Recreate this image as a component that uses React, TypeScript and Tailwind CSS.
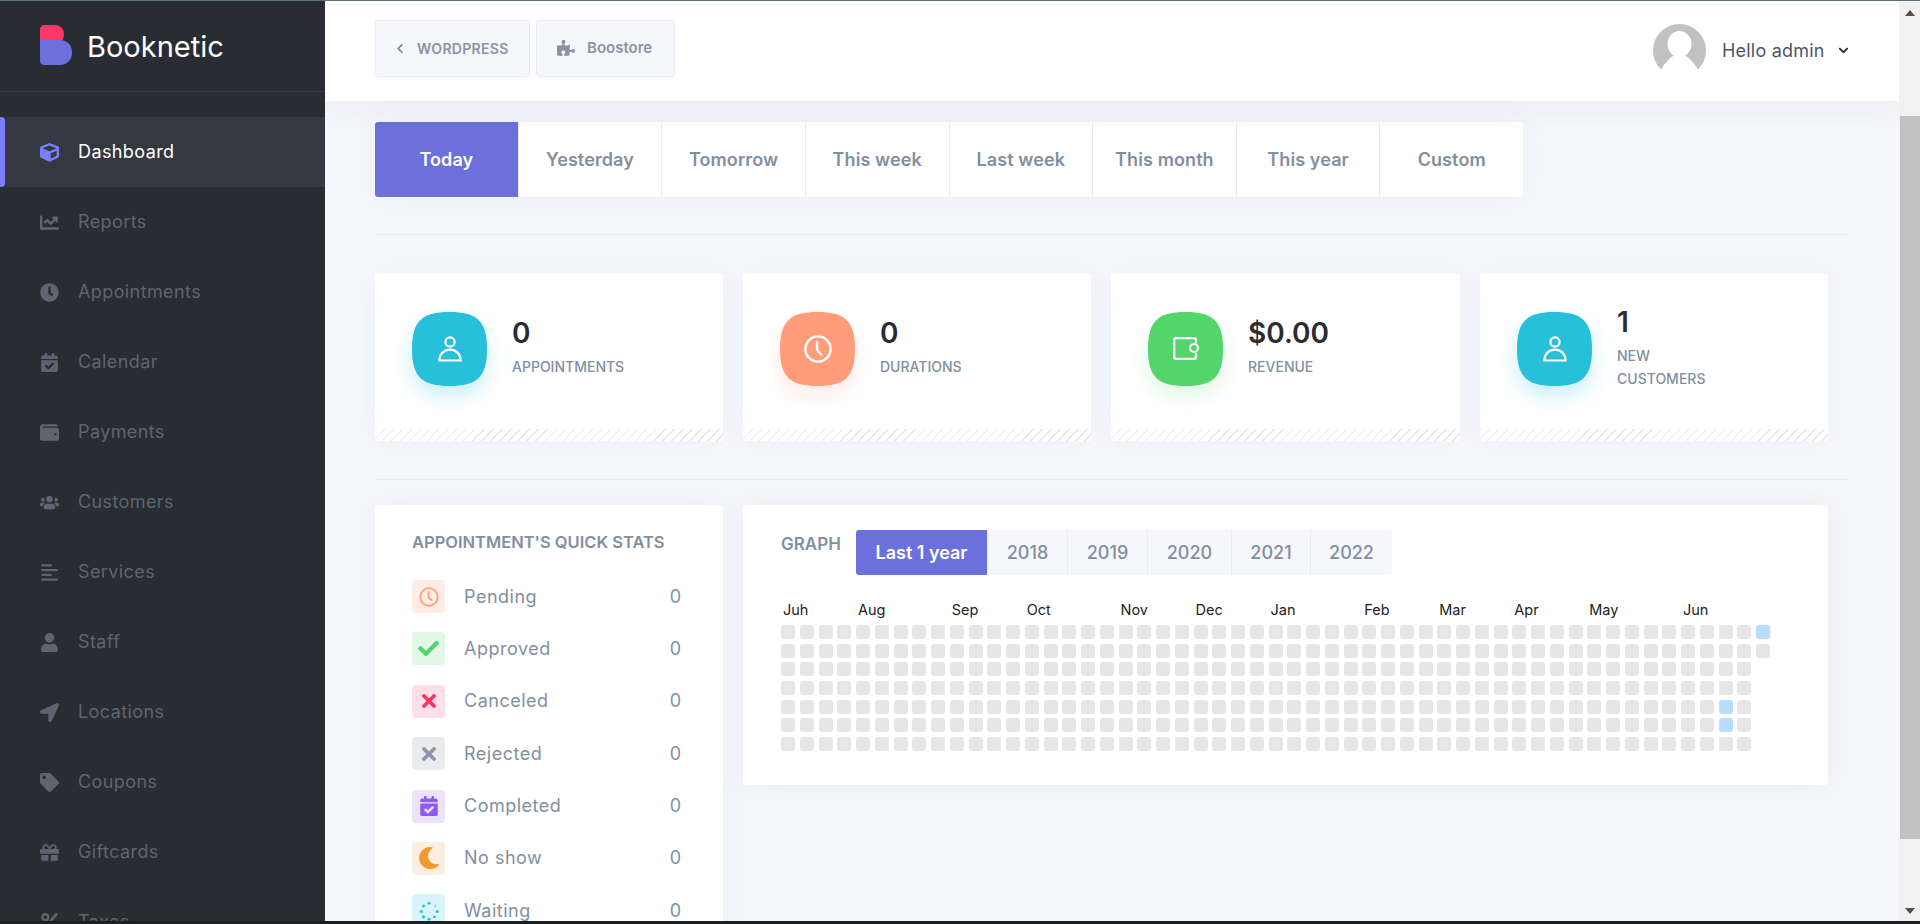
import React from "react";
import {
  FaCube, FaChartLine, FaClock, FaCalendarCheck, FaWallet, FaUsers, FaAlignLeft, FaUser,
  FaLocationArrow, FaTag, FaGift, FaPercent, FaPuzzlePiece, FaChevronLeft, FaChevronDown,
  FaCheck, FaMoon,
} from "react-icons/fa";

const nav: [string, React.ComponentType<{ className?: string }>][] = [
  ["Reports", FaChartLine],
  ["Appointments", FaClock],
  ["Calendar", FaCalendarCheck],
  ["Payments", FaWallet],
  ["Customers", FaUsers],
  ["Services", FaAlignLeft],
  ["Staff", FaUser],
  ["Locations", FaLocationArrow],
  ["Coupons", FaTag],
  ["Giftcards", FaGift],
  ["Taxes", FaPercent],
];

const Squircle = ({ fill, shadow, children }: { fill: string; shadow: string; children: React.ReactNode }) => (
  <div className={`relative w-[75px] h-[74px] shrink-0 ${shadow}`}>
    <svg viewBox="0 0 75 74" className="w-[75px] h-[74px] block">
      <path d="M37.5 0C64 0 75 8 75 37C75 66 64 74 37.5 74C11 74 0 66 0 37C0 8 11 0 37.5 0Z" fill={fill} />
    </svg>
    <div className="absolute inset-0 flex items-center justify-center">{children}</div>
  </div>
);

const PersonIcon = () => (
  <svg width="24" height="26" viewBox="0 0 24 26" fill="none" stroke="#fff" strokeWidth="2.2">
    <circle cx="12" cy="6" r="4.6" />
    <path d="M1.4 24.5H22.6C22.6 18 18 13.6 12 13.6S1.4 18 1.4 24.5Z" />
  </svg>
);
const ClockIcon = () => (
  <svg width="28" height="28" viewBox="0 0 28 28" fill="none" stroke="#fff" strokeWidth="2.4" strokeLinecap="round">
    <circle cx="14" cy="14" r="12.6" />
    <path d="M13 7V14.5L17 19.5" />
  </svg>
);
const WalletIcon = () => (
  <svg width="26" height="23" viewBox="0 0 26 23" fill="none" stroke="#fff" strokeWidth="2.2" strokeLinejoin="round">
    <path d="M23 6V3C23 2 22 1.2 21 1.2H3C2 1.2 1.2 2 1.2 3V20C1.2 21 2 21.8 3 21.8H21C22 21.8 23 21 23 20V16" />
    <circle cx="21" cy="11" r="4" />
  </svg>
);

const Card = ({ width, fill, shadow, icon, num, label }: { width: string; fill: string; shadow: string; icon: React.ReactNode; num: string; label: React.ReactNode }) => (
  <div className={`${width} h-[168px] bg-white rounded-[3px] shadow-[0_0_30px_rgba(60,70,110,0.04)] overflow-hidden flex flex-col`}>
    <div className="flex-1 flex items-center pl-[37px] pr-4 pb-[5px]">
      <Squircle fill={fill} shadow={shadow}>{icon}</Squircle>
      <div className="ml-[25px] pt-[2px]">
        <div className="text-[28px] leading-[23px] font-semibold text-[#292d32] mb-[10px] mt-[1px]">{num}</div>
        <div className="text-[14px] leading-[23px] text-[#828f9f] font-medium">{label}</div>
      </div>
    </div>
    <div className="h-3 bg-[repeating-linear-gradient(135deg,#e4e6ea_0,#e4e6ea_1px,#ffffff_1px,#ffffff_6.4px)]" />
  </div>
);

const Dots = () => (
  <svg width="20" height="20" viewBox="0 0 22 22" fill="#2bbfdb">
    <circle cx="11" cy="2.5" r="1.7" />
    <circle cx="18" cy="5.5" r="0.9" />
    <circle cx="20" cy="11.5" r="1.7" />
    <circle cx="17" cy="17.5" r="1.6" />
    <circle cx="11" cy="20" r="1.7" />
    <circle cx="5" cy="17.5" r="1.7" />
    <circle cx="2.5" cy="11.5" r="1.7" />
    <circle cx="5" cy="5.5" r="1.7" />
  </svg>
);
const RingClock = () => (
  <svg width="20" height="20" viewBox="0 0 20 20" fill="none" stroke="#ff9d7a" strokeWidth="1.7" strokeLinecap="round">
    <circle cx="10" cy="10" r="8.8" />
    <path d="M9.5 5V10.5L12.5 13" />
  </svg>
);
const Cross = ({ color }: { color: string }) => (
  <svg width="14" height="14" viewBox="0 0 14 14" fill="none" stroke={color} strokeWidth="3.8" strokeLinecap="round">
    <path d="M2 2L12 12M12 2L2 12" />
  </svg>
);

const stats: [string, string, React.ReactNode][] = [
  ["Pending", "bg-[#ffece6]", <RingClock />],
  ["Approved", "bg-[#e1f8e6]", <FaCheck className="w-[21px] h-[21px] text-[#53d56c]" />],
  ["Canceled", "bg-[#ffdfe7]", <Cross color="#fb3464" />],
  ["Rejected", "bg-[#e9ebed]", <Cross color="#8d98a8" />],
  ["Completed", "bg-[#ece3fb]", <FaCalendarCheck className="h-[20px] w-[18px] text-[#8e5af0]" />],
  ["No show", "bg-[#fbeddf]", <FaMoon className="w-[22px] h-[22px] text-[#ef9a2a]" />],
  ["Waiting", "bg-[#d9f5fa]", <Dots />],
];

const dateTabs = ["Today", "Yesterday", "Tomorrow", "This week", "Last week", "This month", "This year", "Custom"];
const years: [string, string][] = [["2018", "w-[80px]"], ["2019", "w-[80px]"], ["2020", "w-[84px]"], ["2021", "w-[79px]"], ["2022", "w-[82px]"]];
const months: [string, string][] = [
  ["Juh", "col-start-1 col-span-4"], ["Aug", "col-start-5 col-span-5"], ["Sep", "col-start-10 col-span-4"],
  ["Oct", "col-start-14 col-span-5"], ["Nov", "col-start-19 col-span-4"], ["Dec", "col-start-23 col-span-4"],
  ["Jan", "col-start-27 col-span-5"], ["Feb", "col-start-32 col-span-4"], ["Mar", "col-start-36 col-span-4"],
  ["Apr", "col-start-40 col-span-4"], ["May", "col-start-44 col-span-5"], ["Jun", "col-start-49 col-span-4"],
];
const cellCount = 52 * 7 + 2;
const blue = new Set([50 * 7 + 4, 50 * 7 + 5, 52 * 7]);

export default function App() {
  return (
    <div className="w-[1920px] h-[924px] overflow-hidden flex flex-col font-['Inter',sans-serif] bg-[#f5f7fb]">
      <div className="h-px bg-[#5f7078] shrink-0" />
      <div className="flex-1 min-h-0 flex">
        {/* Sidebar */}
        <aside className="w-[325px] shrink-0 bg-[#292d32] overflow-hidden">
          <div className="h-[90px] border-b border-[#3a3e44] flex items-center pl-10 box-content">
            <svg width="32" height="40" viewBox="0 0 32 40" className="block -mt-[2px]">
              <path d="M0 15H20C27 15 32 20 32 27.5C32 35 27 40 20 40H4C2 40 0 38 0 36Z" fill="#6c70dc" />
              <path d="M0 4C0 2 2 0 4 0H15C20 0 24 4 24 9C24 11 23.5 13.5 22.5 15H0Z" fill="#fc3868" />
            </svg>
            <span className="ml-[15px] text-[29px] text-white leading-none mt-[1px]">Booknetic</span>
          </div>
          <nav className="mt-[25px]">
            <div className="relative h-[70px] bg-[#353841] flex items-center pl-10">
              <div className="absolute left-0 top-0 bottom-0 w-[5px] rounded-r-[4px] bg-[#7b7fff]" />
              <span className="w-[38px] flex"><FaCube className="w-auto h-[19px] text-[#7b7fff]" /></span>
              <span className="text-[18px] tracking-[0.4px] text-white -mt-[2px]">Dashboard</span>
            </div>
            {nav.map(([name, Icon]) => (
              <div key={name} className="h-[70px] flex items-center pl-10">
                <span className="w-[38px] flex"><Icon className="w-auto h-[19px] text-[#5c6570] shrink-0" /></span>
                <span className="text-[18px] tracking-[0.4px] text-[#5c6570] -mt-[2px]">{name}</span>
              </div>
            ))}
          </nav>
        </aside>

        {/* Main */}
        <div className="flex-1 min-w-0 flex flex-col overflow-hidden">
          <header className="h-[100px] shrink-0 bg-white shadow-[0_8px_30px_rgba(60,70,110,0.06)] relative z-10 flex items-center pl-[50px] pr-[50px]">
            <div className="flex gap-[6px] -mt-[6px]">
              <div className="w-[155px] h-[57px] bg-[#f5f7fb] border border-[#e6ebf6] rounded-[3px] flex items-center pl-[20px]">
                <FaChevronLeft className="w-[8px] h-[11px] text-[#7d8797]" />
                <span className="ml-[13px] text-[14px] tracking-[0.3px] font-semibold text-[#8a93a5]">WORDPRESS</span>
              </div>
              <div className="w-[139px] h-[57px] bg-[#f5f7fb] border border-[#e6ebf6] rounded-[3px] flex items-center pl-5">
                <FaPuzzlePiece className="w-[18px] h-[18px] text-[#8a93a5]" />
                <span className="ml-[12px] text-[15px] font-semibold text-[#8a93a5]">Boostore</span>
              </div>
            </div>
            <div className="ml-auto flex items-center -mt-[1px]">
              <svg width="53" height="53" viewBox="0 0 53 53">
                <circle cx="26.5" cy="26.5" r="26.5" fill="#c1c1c1" />
                <ellipse cx="26.5" cy="20" rx="12" ry="13" fill="#fff" />
                <path d="M0 53V45L8.5 45C13 37 20 30 26.5 30S40 37 44.5 45L53 45V53Z" fill="#fff" />
              </svg>
              <span className="ml-4 text-[18px] tracking-[0.2px] text-[#50565f] w-[105px] whitespace-nowrap">Hello admin</span>
              <FaChevronDown className="ml-[11px] w-[11px] h-[11px] text-[#292d32]" />
            </div>
          </header>
          <main className="flex-1 min-h-0 overflow-hidden pl-[50px] pr-[51px] pt-[21px]">
            <div className="flex w-[1148px] h-[75px] bg-white rounded-[3px] shadow-[0_0_30px_rgba(60,70,110,0.05)]">
              {dateTabs.map((t, i) => (
                <div key={t} className={i === 0
                  ? "flex-1 flex items-center justify-center pb-[1px] bg-[#6c70dc] text-white text-[18px] tracking-[0.1px] font-semibold rounded-l-[3px]"
                  : "flex-1 flex items-center justify-center pb-[1px] border-l border-[#e9ecf5] text-[#828f9f] text-[18px] tracking-[0.1px] font-semibold"}>{t}</div>
              ))}
            </div>
            <div className="h-px bg-[#e8ebf4] mt-[37px]" />
            <div className="flex gap-5 mt-[38px] w-[1453px]">
              <Card width="w-[348px]" fill="#28bfdb" shadow="drop-shadow-[0_10px_10px_rgba(40,191,219,0.25)]" icon={<PersonIcon />} num="0" label="APPOINTMENTS" />
              <Card width="w-[348px]" fill="#ff9d7a" shadow="drop-shadow-[0_10px_10px_rgba(255,157,122,0.2)]" icon={<ClockIcon />} num="0" label="DURATIONS" />
              <Card width="w-[349px]" fill="#53d56c" shadow="drop-shadow-[0_10px_10px_rgba(83,213,108,0.2)]" icon={<WalletIcon />} num="$0.00" label="REVENUE" />
              <Card width="w-[348px]" fill="#28bfdb" shadow="drop-shadow-[0_10px_10px_rgba(40,191,219,0.25)]" icon={<PersonIcon />} num="1" label={<>NEW<br />CUSTOMERS</>} />
            </div>
            <div className="h-px bg-[#e8ebf4] mt-[38px]" />
            <div className="flex gap-5 mt-[25px] w-[1453px] items-start">
              <section className="w-[348px] h-[500px] shrink-0 bg-white rounded-[3px] shadow-[0_0_30px_rgba(60,70,110,0.05)] pt-[26px] pl-[37px] pr-[42px]">
                <h2 className="text-[16.5px] leading-[23px] font-semibold text-[#828f9f] whitespace-nowrap">APPOINTMENT'S QUICK STATS</h2>
                <div className="mt-[26px] flex flex-col gap-[19.4px]">
                  {stats.map(([name, bg, icon]) => (
                    <div key={name} className="flex items-center h-[33px]">
                      <div className={`w-[33px] h-[33px] rounded-[4px] flex items-center justify-center ${bg}`}>{icon}</div>
                      <span className="ml-[19px] text-[18px] tracking-[0.5px] text-[#828f9f] -mt-px">{name}</span>
                      <span className="ml-auto text-[18px] text-[#828f9f] -mt-px">0</span>
                    </div>
                  ))}
                </div>
              </section>
              <section className="flex-1 h-[280px] bg-white rounded-[3px] shadow-[0_0_30px_rgba(60,70,110,0.06)] pt-[25px] pl-[38px]">
                <div className="flex items-start">
                  <span className="w-[75px] text-[17px] leading-[28px] font-semibold text-[#828f9f]">GRAPH</span>
                  <div className="flex h-[45px] bg-[#f5f7fb] rounded-[3px]">
                    <div className="w-[131px] flex items-center justify-center bg-[#6c70dc] text-white text-[18px] font-semibold rounded-l-[3px]">Last 1 year</div>
                    {years.map(([y, w]) => (
                      <div key={y} className={`${w} flex items-center justify-center border-l border-[#e8ebf4] text-[#828f9f] text-[18px] font-medium`}>{y}</div>
                    ))}
                  </div>
                </div>
                <div className="mt-[25px] grid grid-cols-[repeat(53,14px)] gap-x-[4.75px] h-[20px]">
                  {months.map(([m, pos]) => (
                    <span key={m} className={`${pos} pl-[2px] text-[14.5px] leading-[20px] text-[#222]`}>{m}</span>
                  ))}
                </div>
                <div className="mt-[5px] grid grid-flow-col grid-rows-[repeat(7,14px)] auto-cols-[14px] gap-x-[4.75px] gap-y-[4.7px]">
                  {Array.from({ length: cellCount }, (_, i) => (
                    <div key={i} className={`rounded-[3px] ${blue.has(i) ? "bg-[#bcdcff]" : "bg-[#e6e6e6]"}`} />
                  ))}
                </div>
              </section>
            </div>
          </main>
        </div>

        {/* Scrollbar */}
        <div className="w-[21px] shrink-0 bg-[#f1f1f1] flex flex-col items-center">
          <svg width="12" height="8" viewBox="0 0 12 8" className="mt-[8px] shrink-0"><path d="M6 1L11 7H1Z" fill="#505050" /></svg>
          <div className="mt-[99px] w-full pl-[1px] pr-0">
            <div className="h-[723px] bg-[#c1c1c1]" />
          </div>
          <svg width="12" height="8" viewBox="0 0 12 8" className="mt-[68px] shrink-0"><path d="M1 1H11L6 7Z" fill="#505050" /></svg>
        </div>
      </div>
      <div className="h-[3px] bg-[#1d1f22] shrink-0" />
    </div>
  );
}
